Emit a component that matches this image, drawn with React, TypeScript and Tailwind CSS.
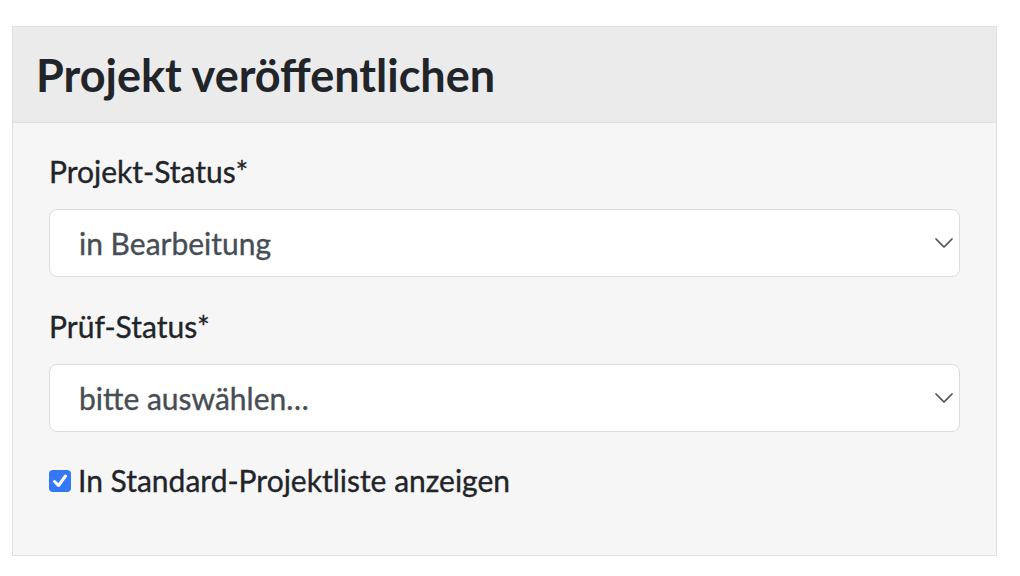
const font = { fontFamily: "Lato, 'Open Sans', sans-serif" };

function Chevron() {
  return (
    <svg
      viewBox="0 0 18 10"
      className="absolute right-[7px] top-[29px] w-[18px] h-[10px] pointer-events-none"
    >
      <path d="M1 1l8 8 8-8" fill="none" stroke="#4a4f57" strokeWidth="1.7" strokeLinecap="round" strokeLinejoin="round" />
    </svg>
  );
}

function SelectField({ label, value }: { label: string; value: string }) {
  return (
    <div className="flex flex-col">
      <label className="text-[30px] leading-[48px] text-[#212529] mb-[14px] [-webkit-text-stroke:0.35px]">
        {label}
      </label>
      <div className="relative">
        <select
          defaultValue={value}
          className="appearance-none w-full h-[68px] bg-white border border-[#dcdcdf] rounded-[8px] pl-[29px] pr-[60px] text-[30px] text-[#474d55] outline-none [-webkit-text-stroke:0.35px]"
        >
          <option>{value}</option>
        </select>
        <Chevron />
      </div>
    </div>
  );
}

export default function App() {
  return (
    <div className="w-[1020px] h-[576px] bg-white pt-[26px] pl-[12px]" style={font}>
      <div className="w-[985px] h-[530px] border border-[#dedfe2] bg-[#f6f6f6] flex flex-col">
        <div className="h-[96px] bg-[#ebebeb] border-b border-[#dedfe2] flex items-center px-[23px]">
          <h3 className="text-[45px] font-bold text-[#212529] leading-none pt-[2px]">
            Projekt veröffentlichen
          </h3>
        </div>
        <div className="flex flex-col px-[36px] pt-[24px]">
          <SelectField label="Projekt-Status*" value="in Bearbeitung" />
          <div className="h-[25px]" />
          <SelectField label="Prüf-Status*" value="bitte auswählen…" />
          <div className="flex items-center mt-[24px] h-[48px]">
            <span className="w-[22px] h-[22px] rounded-[4px] bg-[#3478f6] flex items-center justify-center mr-[7px] mt-[2px]">
              <svg viewBox="0 0 22 22" className="w-[22px] h-[22px]">
                <path d="M5.5 11.5l4 4L16.5 6" fill="none" stroke="white" strokeWidth="3" strokeLinecap="round" strokeLinejoin="round" />
              </svg>
            </span>
            <span className="text-[30px] leading-[48px] text-[#212529] [-webkit-text-stroke:0.35px]">
              In Standard-Projektliste anzeigen
            </span>
          </div>
        </div>
      </div>
    </div>
  );
}
